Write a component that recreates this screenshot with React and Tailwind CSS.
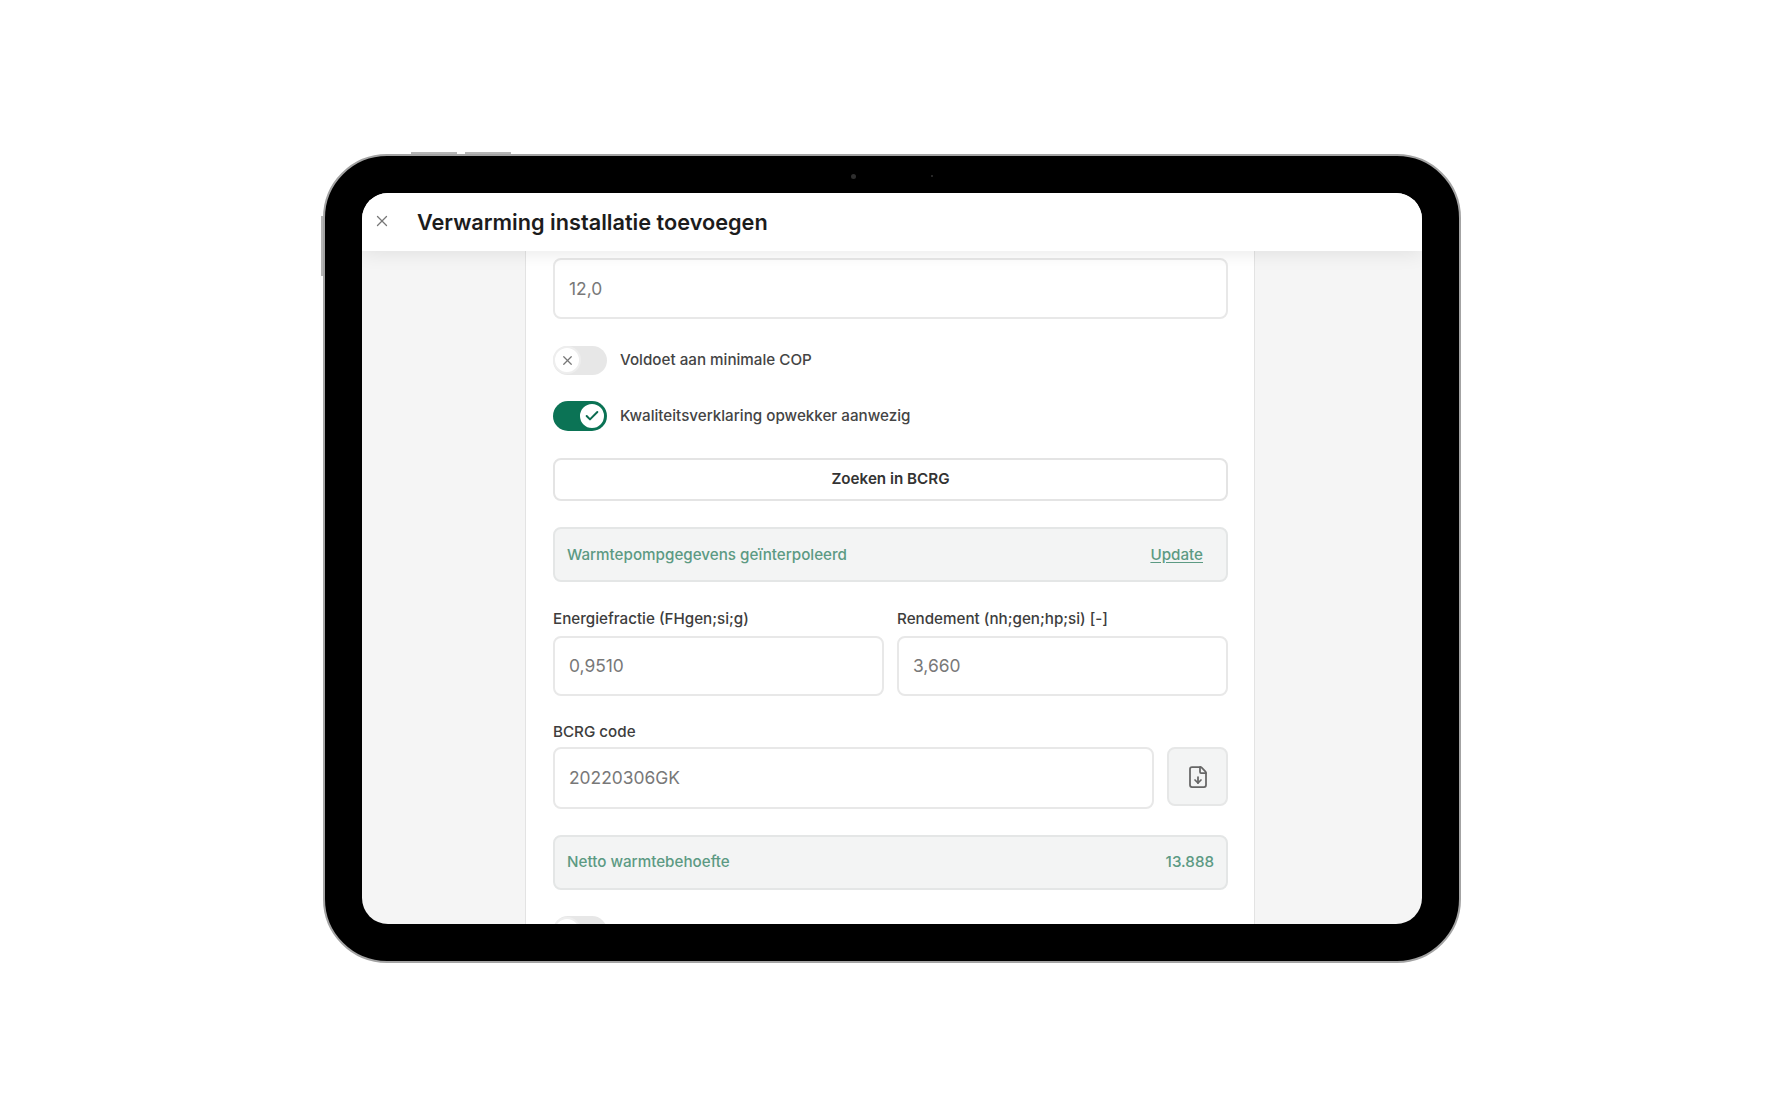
import React from 'react';
import { Check, FileDown, X } from 'lucide-react';

function Field({ value, className = '' }) {
  return (
    <div className={`flex items-center rounded-lg border-2 border-[#e8e8e8] bg-white px-[14px] pt-[1px] text-[17.4px] text-[#787878] ${className}`}>
      {value}
    </div>
  );
}

function Toggle({ on, label, className = 'h-[30px]' }) {
  return (
    <div className="flex items-center gap-[13px]">
      <div className={`flex w-[54px] items-center rounded-full ${className} ${on ? 'justify-end bg-[#0b7355] pr-[1px]' : 'justify-start bg-[#e7e7e7]'}`}>
        <div className={`flex h-[28px] w-[28px] items-center justify-center rounded-full border-2 bg-white ${on ? 'border-[#0b7355] text-[#0b6b50]' : 'border-[#eeeeee] text-[#777777]'}`}>
          {on ? <Check size={16} strokeWidth={3} /> : <X size={15} strokeWidth={2} />}
        </div>
      </div>
      <span className="text-[15.2px] font-medium text-[#444444]">{label}</span>
    </div>
  );
}

function InfoBox({ className, left, right }) {
  return (
    <div className={`flex items-center justify-between rounded-lg border-2 border-[#e4e6e6] bg-[#f3f4f4] pl-[12px] text-[15.2px] font-medium text-[#5c9a83] ${className}`}>
      <span>{left}</span>
      {right}
    </div>
  );
}

function Label({ children, className = 'mb-[7px]' }) {
  return <div className={`h-[20px] text-[15.2px] leading-[20px] font-medium text-[#3d3d3d] ${className}`}>{children}</div>;
}

export default function App() {
  return (
    <div className="flex h-screen items-center justify-center bg-white font-['Inter',sans-serif]">
      <div className="relative mb-[2px] box-border h-[809px] w-[1138px] rounded-[64px] border-2 border-[#a3a3a3] bg-black p-[37px]">
        {/* hardware buttons and cameras */}
        <div className="absolute top-[-4px] left-[86px] h-[2px] w-[46px] bg-[#b5b5b5]" />
        <div className="absolute top-[-4px] left-[140px] h-[2px] w-[46px] bg-[#b5b5b5]" />
        <div className="absolute top-[60px] left-[-4px] h-[60px] w-[2px] bg-[#b5b5b5]" />
        <div className="absolute top-[18px] left-[526px] h-[5px] w-[5px] rounded-full bg-[#2e2e2e]" />
        <div className="absolute top-[19px] left-[606px] h-[2px] w-[2px] rounded-full bg-[#333333]" />

        <div className="flex h-[731px] w-[1060px] flex-col overflow-hidden rounded-[26px] bg-[#f5f5f5]">
          <header className="relative z-10 flex h-[58px] shrink-0 items-center gap-[26px] bg-white pl-[11px] shadow-[0_2px_20px_rgba(0,0,0,0.09)]">
            <X size={18} strokeWidth={1.75} className="-mt-[2px] text-[#777777]" />
            <h1 className="text-[21.7px] font-semibold text-[#1c1c1c]">Verwarming installatie toevoegen</h1>
          </header>

          <main className="ml-[163px] flex w-[730px] flex-1 flex-col gap-[26.5px] overflow-hidden border-x border-[#e3e3e3] bg-white pt-[7px] pr-[26px] pl-[27px]">
            <Field value="12,0" className="h-[61px] shrink-0" />
            <Toggle label="Voldoet aan minimale COP" className="h-[29px]" />
            <Toggle on label="Kwaliteitsverklaring opwekker aanwezig" />
            <button className="h-[43px] shrink-0 rounded-lg border-2 border-[#e4e4e4] bg-white text-[15.2px] font-semibold text-[#333333]">
              Zoeken in BCRG
            </button>
            <InfoBox
              className="h-[55px] shrink-0 pt-[1px] pr-[23px]"
              left="Warmtepompgegevens geïnterpoleerd"
              right={<span className="underline underline-offset-2">Update</span>}
            />
            <div className="grid shrink-0 grid-cols-2 gap-[13px]">
              <div>
                <Label>Energiefractie (FHgen;si;g)</Label>
                <Field value="0,9510" className="h-[60px]" />
              </div>
              <div>
                <Label>Rendement (nh;gen;hp;si) [-]</Label>
                <Field value="3,660" className="h-[60px]" />
              </div>
            </div>
            <div className="shrink-0">
              <Label className="mb-[5px]">BCRG code</Label>
              <div className="flex items-start gap-[13px]">
                <Field value="20220306GK" className="h-[62px] flex-1" />
                <button className="flex h-[59px] w-[61px] items-center justify-center rounded-lg border-2 border-[#e6e7e7] bg-[#f3f4f4] text-[#666666]">
                  <FileDown size={24} strokeWidth={1.75} />
                </button>
              </div>
            </div>
            <InfoBox className="-mt-[1px] h-[55px] shrink-0 pr-[12px]" left="Netto warmtebehoefte" right={<span>13.888</span>} />
            <Toggle label="" />
          </main>
        </div>
      </div>
    </div>
  );
}
